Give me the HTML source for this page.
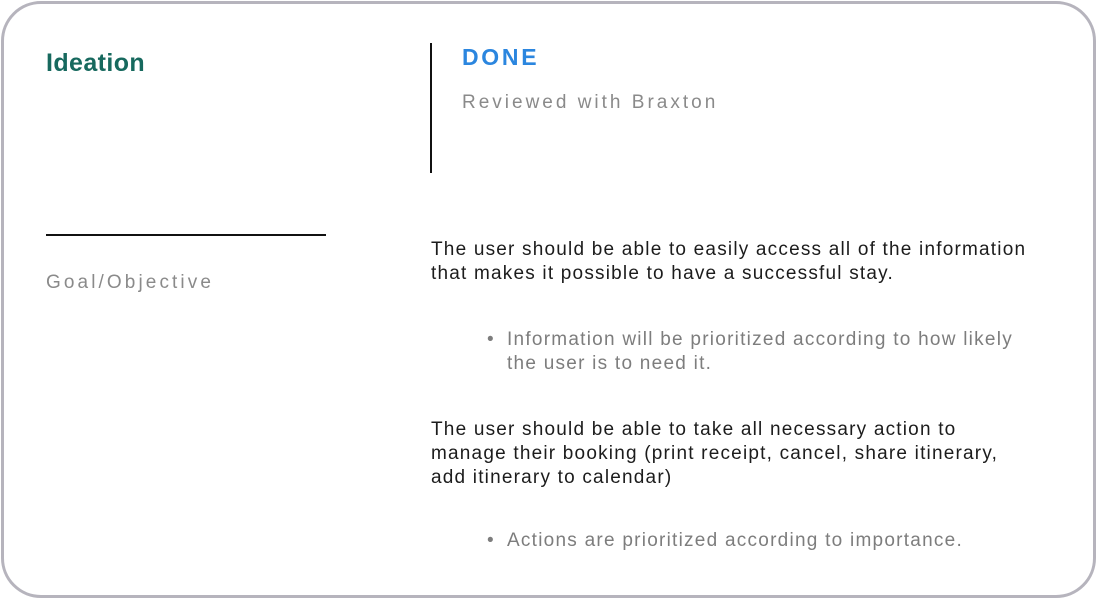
<!DOCTYPE html>
<html><head><style>
html,body{margin:0;padding:0;background:#fff;}
body{width:1096px;height:598px;position:relative;overflow:hidden;font-family:"Liberation Sans",sans-serif;}
.card{position:absolute;left:1px;top:1px;width:1089px;height:591px;border:3px solid #b6b4bd;border-radius:40px;}
.a{position:absolute;white-space:nowrap;}
.t{font-size:19px;color:#1c1c1c;line-height:24px;letter-spacing:1.2px;}
.g{font-size:19px;color:#7d7d7d;line-height:24px;letter-spacing:1.25px;}
</style></head><body>
<div class="card"></div>
<div class="a" style="left:46px;top:49px;font-size:25px;color:#17695e;font-weight:bold;letter-spacing:0.4px;">Ideation</div>
<div class="a" style="left:430px;top:43px;width:2px;height:130px;background:#111;"></div>
<div class="a" style="left:462px;top:44px;font-size:23px;color:#2b86df;font-weight:bold;letter-spacing:2.7px;">DONE</div>
<div class="a" style="left:462px;top:92px;font-size:19px;color:#8a8a8a;letter-spacing:3px;">Reviewed with Braxton</div>
<div class="a" style="left:46px;top:234px;width:280px;height:2px;background:#111;"></div>
<div class="a" style="left:46px;top:272px;font-size:19px;color:#8a8a8a;letter-spacing:3.1px;">Goal/Objective</div>
<div class="a t" style="left:431px;top:238px;">The user should be able to easily access all of the information<br>that makes it possible to have a successful stay.</div>
<div class="a g" style="left:487px;top:328px;">•</div>
<div class="a g" style="left:507px;top:328px;">Information will be prioritized according to how likely<br>the user is to need it.</div>
<div class="a t" style="left:431px;top:418px;">The user should be able to take all necessary action to<br>manage their booking (print receipt, cancel, share itinerary,<br>add itinerary to calendar)</div>
<div class="a g" style="left:487px;top:529px;">•</div>
<div class="a g" style="left:507px;top:529px;">Actions are prioritized according to importance.</div>
</body></html>
